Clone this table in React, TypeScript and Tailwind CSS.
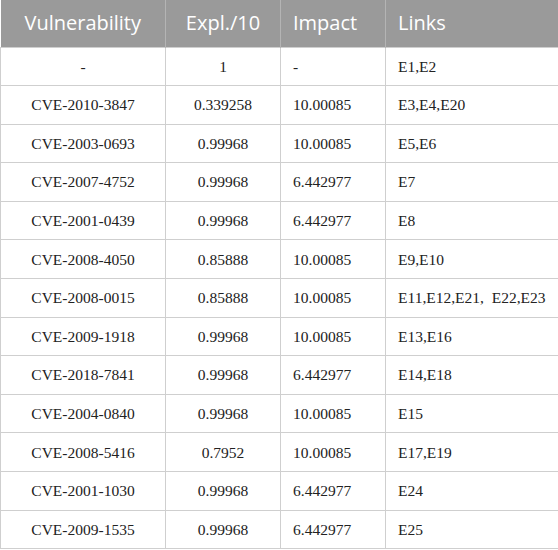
const rows: [string, string, string, string][] = [
  ['-', '1', '-', 'E1,E2'],
  ['CVE-2010-3847', '0.339258', '10.00085', 'E3,E4,E20'],
  ['CVE-2003-0693', '0.99968', '10.00085', 'E5,E6'],
  ['CVE-2007-4752', '0.99968', '6.442977', 'E7'],
  ['CVE-2001-0439', '0.99968', '6.442977', 'E8'],
  ['CVE-2008-4050', '0.85888', '10.00085', 'E9,E10'],
  ['CVE-2008-0015', '0.85888', '10.00085', 'E11,E12,E21,\u00a0 E22,E23'],
  ['CVE-2009-1918', '0.99968', '10.00085', 'E13,E16'],
  ['CVE-2018-7841', '0.99968', '6.442977', 'E14,E18'],
  ['CVE-2004-0840', '0.99968', '10.00085', 'E15'],
  ['CVE-2008-5416', '0.7952', '10.00085', 'E17,E19'],
  ['CVE-2001-1030', '0.99968', '6.442977', 'E24'],
  ['CVE-2009-1535', '0.99968', '6.442977', 'E25'],
]

export default function App() {
  return (
    <div className="w-[558px] h-[550px] bg-white overflow-hidden">
      <table className="w-[558px] border-collapse table-fixed">
        <colgroup>
          <col className="w-[165px]" />
          <col className="w-[115px]" />
          <col className="w-[105px]" />
          <col className="w-[173px]" />
        </colgroup>
        <thead>
          <tr className="h-[47px] bg-[#9a9a9a] text-white text-[20px] font-['Open_Sans',sans-serif]">
            <th className="font-normal text-center border-r border-[#b4b4b4]">Vulnerability</th>
            <th className="font-normal text-center border-r border-[#b4b4b4]">Expl./10</th>
            <th className="font-normal text-left pl-[12px] border-r border-[#b4b4b4]">Impact</th>
            <th className="font-normal text-left pl-[12px]">Links</th>
          </tr>
        </thead>
        <tbody className="font-['Liberation_Serif',serif] text-[15.5px] text-[#222]">
          {rows.map((r, i) => (
            <tr key={i} className="h-[38.6px]">
              <td className="text-center border border-[#cfcfcf]">{r[0]}</td>
              <td className="text-center border border-[#cfcfcf]">{r[1]}</td>
              <td className="pl-[12px] border border-[#cfcfcf]">{r[2]}</td>
              <td className="pl-[12px] border border-[#cfcfcf] whitespace-nowrap">{r[3]}</td>
            </tr>
          ))}
        </tbody>
      </table>
    </div>
  )
}
